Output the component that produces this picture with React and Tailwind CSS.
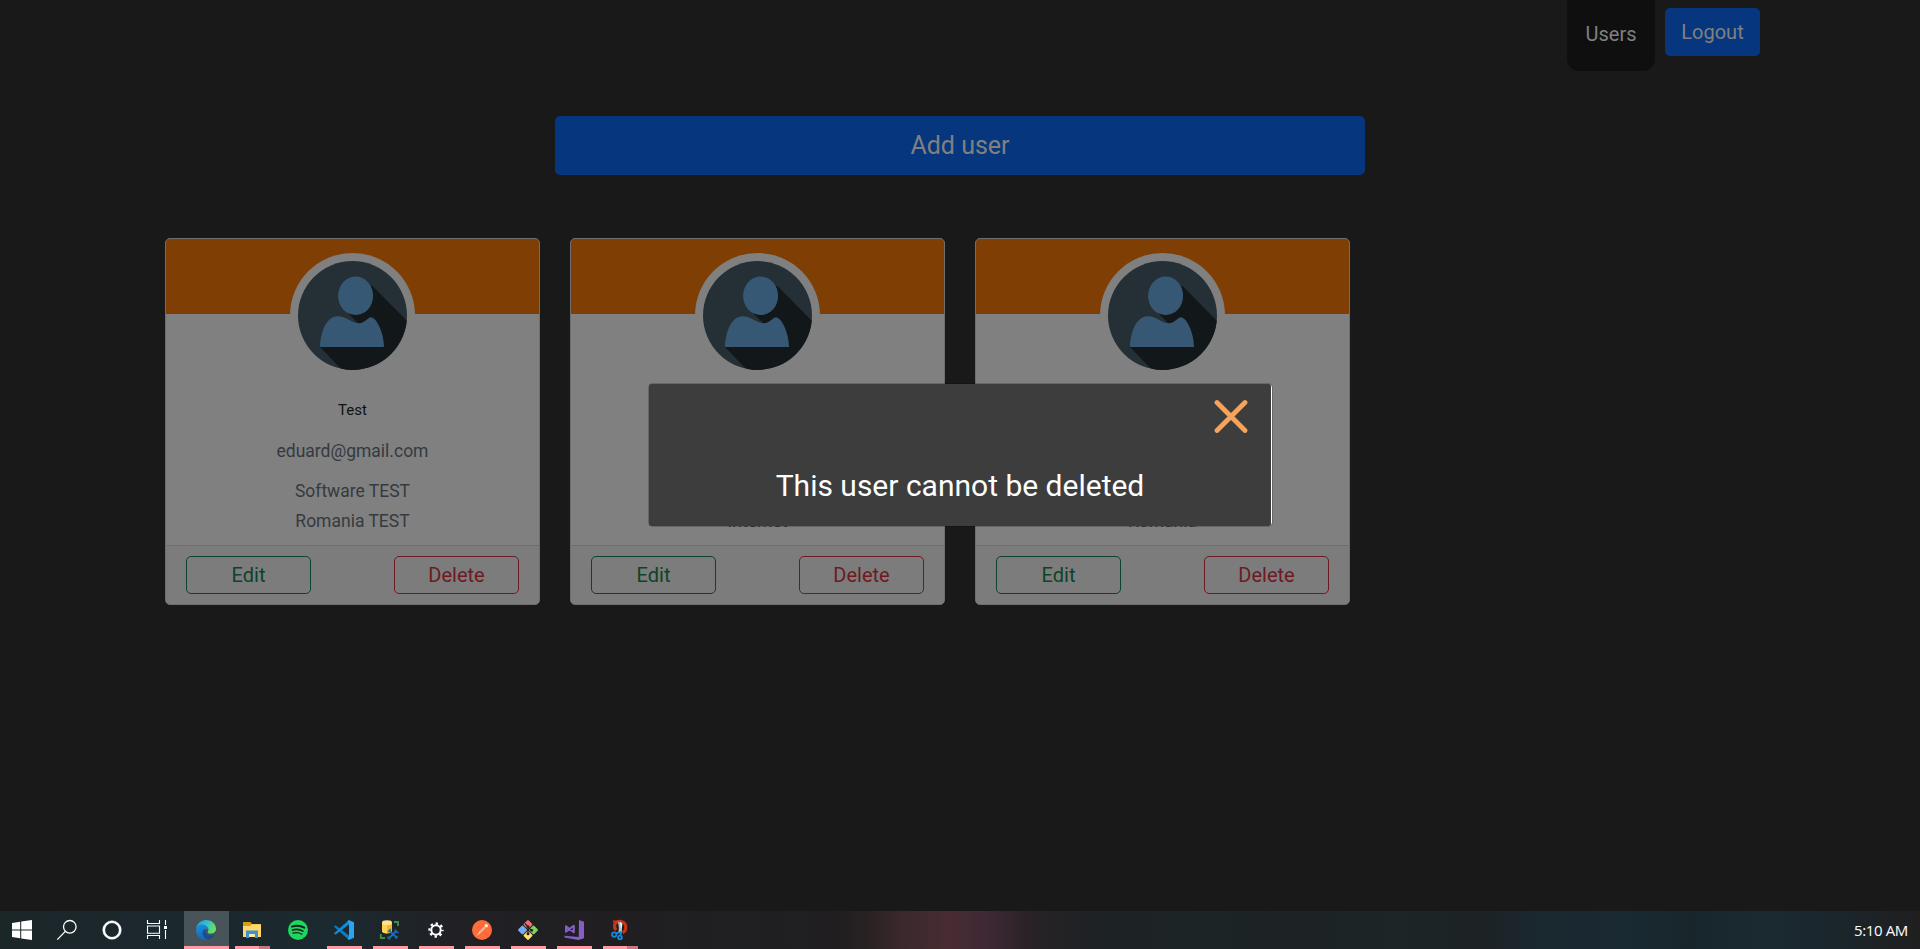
import React from "react";

const users = [
  { name: "Test", email: "eduard@gmail.com", company: "Software TEST", place: "Romania TEST" },
  { name: "", email: "", company: "", place: "Internet" },
  { name: "", email: "", company: "", place: "Romania" },
];

function Avatar() {
  return (
    <svg viewBox="0 0 109 109" className="h-[109px] w-[109px]">
      <clipPath id="disc">
        <circle cx="54.5" cy="54.5" r="54.5" />
      </clipPath>
      <g clipPath="url(#disc)">
        <rect width="109" height="109" fill="#253036" />
        <path d="M74 24.5 L112 63 V112 H47 L22 86 L50 70 L61 63 L50.5 52.5 Z" fill="#121719" />
      </g>
      <ellipse cx="57.6" cy="34.8" rx="17.5" ry="19.2" fill="#375874" />
      <path d="M22 86 C22.5 70 29 55.3 39.5 55.3 C48 55.3 54 62.3 61 62.3 C67 62.3 69.5 56.3 73 56.3 C78 56.3 86 71 86 86 Z" fill="#375874" />
    </svg>
  );
}

function UserCard({ user }) {
  return (
    <article className="flex h-[367px] w-[375px] flex-col overflow-hidden rounded-[5px] border border-[#6e6e6e] bg-[#808080]">
      <div className="flex h-[75px] shrink-0 justify-center bg-[#7f3f04] pt-[14px]">
        <div className="flex h-[125px] w-[125px] shrink-0 items-center justify-center rounded-full bg-[#808080]">
          <Avatar />
        </div>
      </div>
      <div className="flex grow flex-col items-center pt-[82px] text-[17.5px] text-[#363a3e]">
        <h5 className="h-[28px] text-[15px] leading-[28px] text-[#101214]">{user.name}</h5>
        <p className="mt-3 h-[30px] leading-[30px]">{user.email}</p>
        <p className="mt-[10px] h-[30px] leading-[30px]">{user.company}</p>
        <p className="h-[30px] leading-[30px]">{user.place}</p>
      </div>
      <footer className="flex justify-between border-t border-[#6e6e6e] bg-[#7c7c7c] px-5 py-[10px] text-xl">
        <button className="h-[38px] w-[125px] rounded-[5px] border border-[#0c432a] text-[#0c432a]">Edit</button>
        <button className="h-[38px] w-[125px] rounded-[5px] border border-[#6e1a22] text-[#6e1a22]">Delete</button>
      </footer>
    </article>
  );
}

const svgProps = { viewBox: "0 0 20 20", className: "h-5 w-5 overflow-visible" };

const WindowsIcon = () => (
  <svg {...svgProps} fill="#fff">
    <path d="M0 3 L8.2 1.8 V9.5 H0Z M9.2 1.6 L20 0 V9.5 H9.2Z M0 10.5 H8.2 V18.2 L0 17Z M9.2 10.5 H20 V20 L9.2 18.4Z" />
  </svg>
);
const SearchIcon = () => (
  <svg {...svgProps} fill="none" stroke="#fff" strokeWidth="1.3">
    <circle cx="12.8" cy="6.8" r="6.3" />
    <path d="M8.3 11.4 L.3 19.6" />
  </svg>
);
const CortanaIcon = () => (
  <svg {...svgProps} fill="none" stroke="#fff">
    <circle cx="10" cy="10" r="8.1" strokeWidth="2.4" />
    <circle cx="10" cy="10" r="9.3" strokeWidth="1" opacity=".4" />
  </svg>
);
const TaskViewIcon = () => (
  <svg {...svgProps} fill="none" stroke="#fff" strokeWidth="1.1">
    <path d="M.5 0 V3.5 H12.5 V0 M.5 19 V15.5 H12.5 V19 M.5 6 H12.5 V13.2 H.5Z M18.5 0 V5 M18.5 10 V19" />
    <rect x="17" y="6" width="3" height="3" fill="#fff" stroke="none" />
  </svg>
);
const EdgeIcon = () => (
  <svg {...svgProps}>
    <defs>
      <linearGradient id="edgeTop" x1="0" y1="0" x2="1" y2=".4">
        <stop offset="0" stopColor="#2595dc" />
        <stop offset=".55" stopColor="#35bfcf" />
        <stop offset="1" stopColor="#66e060" />
      </linearGradient>
      <linearGradient id="edgeLeft" x1="0" y1="0" x2=".3" y2="1">
        <stop offset="0" stopColor="#1b92dc" />
        <stop offset="1" stopColor="#1467bd" />
      </linearGradient>
    </defs>
    <path d="M.2 9 C.8 3.5 5 0 10 0 C16 0 20 4.4 20 8.8 C20 12 17.6 13.6 14.8 13.6 C12.6 13.6 11.4 12.9 11.7 12 C12.8 10.8 12.6 8.2 10.7 6.8 C7 4.2 2 5.5 .2 9Z" fill="url(#edgeTop)" />
    <path d="M.1 10 C.3 6.3 3.2 4.3 6.3 4.6 C9.8 4.9 12.4 7.2 12.6 9.8 C10 7.7 6.4 10 6.8 13.4 C7.2 16.6 9.5 19 12.5 19.6 C5.5 21.3 -.3 16.5 .1 10Z" fill="url(#edgeLeft)" />
    <path d="M8.2 9 C6.8 10.5 6.5 12 6.9 14 C7.5 17 9.8 19.3 12.5 19.6 C15.5 18.9 17.9 17 19 14.8 C16.5 16 13 15.8 10.7 14 C8.8 12.6 8 10.7 8.2 9Z" fill="#174d91" />
  </svg>
);
const FolderIcon = () => (
  <svg {...svgProps}>
    <path d="M1 2 H8.5 L10 4 H18 Q19 4 19 5 V9 H1Z" fill="#d69d10" />
    <path d="M1 6 H8 L10 4.2 H19 V17 H1Z" fill="#ffd868" />
    <path d="M4 18 V10.5 H16 V18 H12.8 V14 H7.2 V18Z" fill="#3c91d8" />
    <path d="M7.2 14 H12.8 V17 H7.2Z" fill="#ffe9a0" />
  </svg>
);
const SpotifyIcon = () => (
  <svg {...svgProps}>
    <circle cx="10" cy="10" r="10" fill="#1ed760" />
    <g fill="none" stroke="#12251b" strokeLinecap="round">
      <path d="M4 6.6 C8 5.3 13 5.8 16.3 7.7" strokeWidth="2" />
      <path d="M4.5 10 C8 9 12 9.4 15 11.1" strokeWidth="1.6" />
      <path d="M4.9 13.1 C8 12.3 11.3 12.6 13.9 14.2" strokeWidth="1.3" />
    </g>
  </svg>
);
const CodeIcon = () => (
  <svg {...svgProps}>
    <path d="M0 6.8 L1.5 5.3 L15 15.5 V20 Z" fill="#0a7bc4" />
    <path d="M0 13.2 L1.5 14.7 L15 4.5 V0 Z" fill="#0f8bd8" />
    <path d="M14.5 0 L20 2.2 V17.8 L14.5 20 L13.8 19 L15 16 V4 L13.8 1Z" fill="#29a4f0" />
  </svg>
);
const DatabaseIcon = () => (
  <svg {...svgProps}>
    <path d="M2 3 V11.5 C3 14 11 14 12 11.5 V3Z" fill="#f8b91c" />
    <path d="M2 3 V11.5 C3 13 5 13.4 7 13.4 V3Z" fill="#ffd34f" />
    <ellipse cx="7" cy="2.7" rx="5" ry="2.4" fill="#ffe68c" />
    <path d="M14 2 H18 V6 M.8 14 V18 H5" fill="none" stroke="#3d9144" strokeWidth="1.8" />
    <path d="M9 10.5 L17 18 M16.5 10.8 L9 18.2" stroke="#1671b8" strokeWidth="1.8" />
    <path d="M8 11.8 L11 9 M15 9.5 L16 12 L18.5 12.5 M7.5 16.7 L10 19.5 M15.5 18.5 L17.5 16.2" stroke="#1671b8" strokeWidth="1.5" fill="none" />
  </svg>
);
const GearIcon = () => (
  <svg {...svgProps} fill="none" stroke="#fff">
    <circle cx="10" cy="10" r="4.7" strokeWidth="2" />
    <circle cx="10" cy="10" r="6.5" strokeWidth="2.3" strokeDasharray="2.4 2.705" strokeDashoffset="1.2" />
  </svg>
);
const PostmanIcon = () => (
  <svg {...svgProps}>
    <circle cx="10" cy="10" r="10" fill="#ff6c37" />
    <path d="M4.5 16 L7.5 11.4 L12.2 6.8 L13.6 8 L9 12.6Z" fill="#ffe3d8" />
    <path d="M7.8 12.5 L13 7.5" stroke="#d9522a" strokeWidth=".6" />
    <circle cx="14.3" cy="5.7" r="1.7" fill="#fff1ea" />
  </svg>
);
const GitIcon = () => (
  <svg {...svgProps}>
    <g transform="rotate(45 10 10)">
      <rect x="2.6" y="2.6" width="7" height="7" rx="1.2" fill="#ef6f70" />
      <rect x="10.4" y="2.6" width="7" height="7" rx="1.2" fill="#7fd15e" />
      <rect x="2.6" y="10.4" width="7" height="7" rx="1.2" fill="#78abf5" />
      <rect x="10.4" y="10.4" width="7" height="7" rx="1.2" fill="#ffe167" />
    </g>
    <path d="M7 3.5 L10 7 V14 M10 7 L13.5 10.5" fill="none" stroke="#282326" strokeWidth="1.2" />
    <g fill="#282326">
      <circle cx="10" cy="6.8" r="1.5" />
      <circle cx="10" cy="13.8" r="1.5" />
      <circle cx="13.7" cy="10.4" r="1.4" />
    </g>
  </svg>
);
const VisualStudioIcon = () => (
  <svg {...svgProps}>
    <path d="M15 0 L20 1.7 V18.2 L14.5 20 L.5 17.6 V15.8 L14.7 17Z" fill="#865fc5" />
    <path d="M2 6.2 V11.8 L9.8 5.8 V12.2Z" fill="none" stroke="#865fc5" strokeWidth="2" strokeLinejoin="round" />
  </svg>
);
const SnipIcon = () => (
  <svg {...svgProps}>
    <path d="M6 10 C4.2 8 3.8 4 6 2.6 C9 .8 13.4 1 15 4 C16.6 7.5 16 11.5 12.6 12.8" fill="none" stroke="#cf3310" strokeWidth="3.2" />
    <path d="M3 1.5 H8" stroke="#cf3310" strokeWidth="2" />
    <path d="M9.8 1.5 L12.4 3.5 L11.4 12.5 L8.4 13Z" fill="#e9eef2" />
    <path d="M8 1.5 L10 3 L11.8 13 L9.6 13Z" fill="#b5bec5" />
    <g fill="none" stroke="#1787d8" strokeWidth="1.8">
      <circle cx="4.2" cy="14.6" r="2.2" />
      <circle cx="10" cy="17.5" r="1.9" />
      <path d="M6.2 13.4 L11.5 11.8 M10.6 15.6 L11 12" />
    </g>
  </svg>
);

const systemIcons = [WindowsIcon, SearchIcon, CortanaIcon, TaskViewIcon];
const apps = [
  { Icon: FolderIcon, stacked: true },
  { Icon: SpotifyIcon, closed: true },
  { Icon: CodeIcon },
  { Icon: DatabaseIcon },
  { Icon: GearIcon },
  { Icon: PostmanIcon },
  { Icon: GitIcon },
  { Icon: VisualStudioIcon },
  { Icon: SnipIcon, stacked: true },
];

function Taskbar() {
  return (
    <div className="flex h-[38px] bg-[linear-gradient(90deg,#1b2629_0px,#1b292f_240px,#1b2a30_330px,#212024_460px,#201e21_640px,#1f2023_740px,#201e20_830px,#272122_865px,#3a282c_900px,#482c32_950px,#3f2935_985px,#292226_1030px,#1e2225_1090px,#1c2426_1210px,#1d2224_1300px,#1c2627_1400px,#1d2224_1480px,#1a2830_1540px,#1a2a32_1620px,#18262c_1690px,#1b2a31_1760px,#1a262c_1830px,#201f20_1920px)]">
      {systemIcons.map((Icon, i) => (
        <div key={i} className="flex w-[45px] justify-center pt-[9px] pr-px">
          <Icon />
        </div>
      ))}
      <div className="ml-1 flex w-[45px] justify-center border-b-[3px] border-[#ff9ba3] bg-[#49545a] pt-[9px] pr-px">
        <EdgeIcon />
      </div>
      {apps.map(({ Icon, stacked, closed }, i) => (
        <div key={i} className="flex w-[46px] flex-col items-center justify-between pt-[9px]">
          <Icon />
          {!closed && (
            <div className="flex h-[3px] w-[35px]">
              <span className="grow bg-[#ff9ba3]" />
              {stacked && <span className="w-[11px] bg-[#c87880]" />}
            </div>
          )}
        </div>
      ))}
      <time className="mt-[9px] mr-3 ml-auto font-['Open_Sans',sans-serif] text-[15px] leading-5 tracking-[-0.35px] text-white">
        5:10 AM
      </time>
    </div>
  );
}

function Dialog() {
  return (
    <div className="absolute top-[383px] left-[648px] h-[144px] w-[625px] rounded-[5px] border border-black/20 bg-white bg-clip-padding">
      <div className="flex h-full w-[622px] flex-col rounded-[2px] bg-[#3d3d3d]">
        <button className="mt-[15px] mr-[23px] self-end" aria-label="Close">
          <svg viewBox="0 0 34 34" className="h-[34px] w-[34px]" stroke="#f7a35c" strokeWidth="4.8" strokeLinecap="round">
            <path d="M3 3.5 L31 31.5 M31 3.5 L3 31.5" />
          </svg>
        </button>
        <p className="mt-[30px] text-center text-[30px] leading-[45px] text-white">This user cannot be deleted</p>
      </div>
    </div>
  );
}

export default function App() {
  return (
    <div className="relative flex h-[949px] w-[1920px] flex-col overflow-hidden bg-[#191919] font-[Roboto,sans-serif]">
      <nav className="flex h-[71px] justify-end pr-[160px] text-xl text-[#808080]">
        <a className="mr-[10px] flex w-[88px] items-center justify-center rounded-b-xl bg-[#0f0f0f] pb-[3px]">Users</a>
        <button className="mt-2 h-12 w-[95px] rounded-[5px] bg-[#06377e]">Logout</button>
      </nav>
      <main className="flex grow flex-col">
        <button className="mx-auto mt-[45px] h-[59px] w-[810px] rounded-[5px] bg-[#06377e] text-[25px] text-[#808080]">
          Add user
        </button>
        <section className="mt-[63px] ml-[165px] flex gap-[30px]">
          {users.map((user, i) => (
            <UserCard key={i} user={user} />
          ))}
        </section>
      </main>
      <Taskbar />
      <Dialog />
    </div>
  );
}
